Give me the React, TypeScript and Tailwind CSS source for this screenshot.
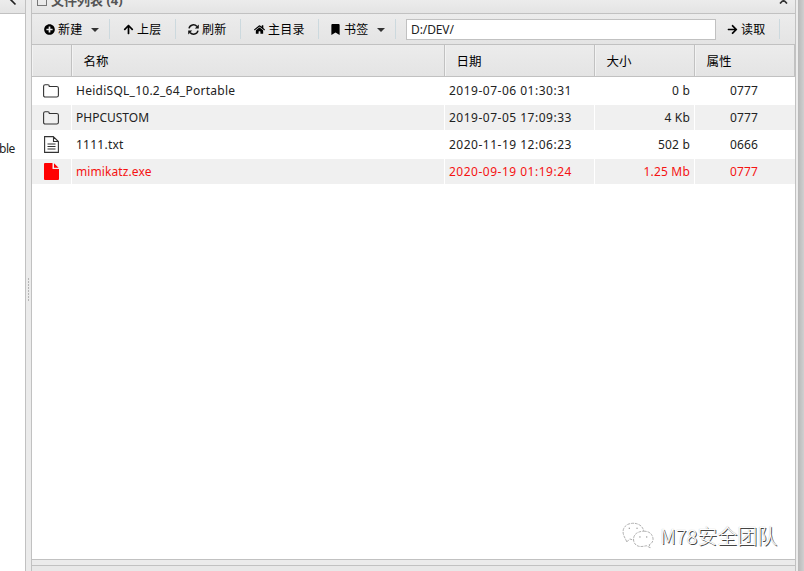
import React from "react";
import { FaPlusCircle, FaArrowUp, FaArrowRight, FaHome, FaBookmark } from "react-icons/fa";

const BAR = "bg-linear-to-b from-[#ececec] to-[#e4e4e4]";

function FolderIcon() {
  return (
    <svg width="16" height="14" viewBox="0 0 16 14" fill="none" stroke="#333" strokeWidth="1.1">
      <path d="M.6 2.3Q.6.7 2.2.7H4.9Q6.3.7 6.3 2.5H13.6Q15.4 2.5 15.4 4.1V11.4Q15.4 13 13.6 13H2.3Q.6 13 .6 11.4Z" />
    </svg>
  );
}

function TextIcon() {
  return (
    <svg width="15" height="17" viewBox="0 0 15 17" fill="none" stroke="#333" strokeWidth="1.1">
      <path d="M.6.6H9.3L14.4 5.5V16.4H.6ZM9.5.6V5.5H14.4M3.5 8H11.5M3.5 10.5H11.5M3.5 13H11.5" />
    </svg>
  );
}

function FileIcon() {
  return (
    <svg width="15" height="17" viewBox="0 0 15 17" fill="#f00">
      <path d="M1 0H8.5V6H15V16Q15 17 14 17H1Q0 17 0 16V1Q0 0 1 0ZM10 0.2L14.6 4.8H10Z" />
    </svg>
  );
}

function RefreshIcon() {
  return (
    <svg width="11" height="11" viewBox="0 0 11 11" fill="none" stroke="#111" strokeWidth="1.5">
      <path d="M1 4.4C2 .5 6.5-.2 9 2.5M10 6.6C9 10.5 4.5 11.2 2 8.5" />
      <path d="M10.8.5V4.5H6.8ZM.2 10.5V6.5H4.2Z" fill="#111" stroke="none" />
    </svg>
  );
}

function Caret() {
  return (
    <svg width="8" height="4" viewBox="0 0 8 4" fill="#333">
      <path d="M0 0H8L4 4Z" />
    </svg>
  );
}

function Tool({ icon, label, caret, className }: { icon: React.ReactNode; label: string; caret?: boolean; className: string }) {
  return (
    <div className={`flex h-5 shrink-0 items-center border-r border-[#ccd9de] text-black ${className}`}>
      <span className="flex w-[11px] shrink-0 justify-center">{icon}</span>
      <span className="ml-[3px] pt-px whitespace-nowrap text-[12px] tracking-[0.2px]">{label}</span>
      {caret && <span className="ml-[9px] pt-px"><Caret /></span>}
    </div>
  );
}

const files = [
  { icon: <FolderIcon />, name: "HeidiSQL_10.2_64_Portable", tracking: "tracking-[0.26px]", date: "2019-07-06 01:30:31", size: "0 b", mode: "0777" },
  { icon: <FolderIcon />, name: "PHPCUSTOM", tracking: "", date: "2019-07-05 17:09:33", size: "4 Kb", mode: "0777" },
  { icon: <TextIcon />, name: "1111.txt", tracking: "tracking-[0.25px]", date: "2020-11-19 12:06:23", size: "502 b", mode: "0666" },
  { icon: <FileIcon />, name: "mimikatz.exe", tracking: "tracking-[0.1px]", date: "2020-09-19 01:19:24", size: "1.25 Mb", mode: "0777", danger: true },
];

const COLS = "grid grid-cols-[39px_372px_149px_99px_100px] gap-x-px";

export default function App() {
  return (
    <div className="relative flex h-[571px] w-[804px] overflow-hidden bg-[#ebebeb] font-['Noto_Sans','Noto_Sans_CJK_SC',sans-serif] text-[12px] text-[#222]">
      <aside className="w-[26px] shrink-0 overflow-hidden border-r border-[#c1c1c1] bg-white">
        <div className={`h-[14px] border-b border-[#c1c1c1] ${BAR}`}>
          <svg className="ml-[9px]" width="8" height="6" viewBox="0 0 8 6" fill="none" stroke="#222" strokeWidth="1.7">
            <path d="M1-1L6.5 4.5" />
          </svg>
        </div>
        <div className="mt-[127px] h-4 w-[15px] leading-4 tracking-[-0.5px]">
          <span className="-ml-px">ble</span>
        </div>
      </aside>
      <div className="flex w-[5px] shrink-0 items-center justify-center pt-[8px]">
        <div className="flex flex-col gap-px">
          {Array.from({ length: 8 }, (_, i) => <i key={i} className="h-[2px] w-px bg-[#b5b5b5]" />)}
        </div>
      </div>
      <div className="flex w-[765px] shrink-0 flex-col border-x border-[#c1c1c1]">
        <main className="flex h-[560px] flex-col border-b border-[#c1c1c1] bg-white">
          <div className={`flex h-[14px] shrink-0 justify-between border-b border-[#c1c1c1] ${BAR}`}>
            <div className="mt-[-8px] flex h-4 items-center pl-[5px] text-[13px] leading-4 font-bold text-[#555]">
              <span className="mt-[3px] mr-[4px] h-[9px] w-[10px] border border-[#777]" />文件列表 (4)
            </div>
            <svg className="mr-[7px]" width="9" height="4" viewBox="0 0 9 4" fill="none" stroke="#333" strokeWidth="1.7">
              <path d="M1 3.5L4.5 0L8 3.5M2-2L4.5 0L7-2" />
            </svg>
          </div>
          <div className={`flex h-[31px] shrink-0 items-center border-b border-[#c1c1c1] ${BAR}`}>
            <Tool className="w-[78px] pl-[12px]" icon={<FaPlusCircle size={11} />} label="新建" caret />
            <Tool className="w-[66px] pl-[13px]" icon={<FaArrowUp size={11} />} label="上层" />
            <Tool className="w-[65px] pl-[12px]" icon={<RefreshIcon />} label="刷新" />
            <Tool className="w-[78px] pl-[13px]" icon={<FaHome size={11} />} label="主目录" />
            <Tool className="w-[77px] pl-[11px]" icon={<FaBookmark size={11} />} label="书签" caret />
            <input
              className="ml-[10px] h-[21px] w-[310px] shrink-0 border border-[#c1c1c1] bg-white px-1 tracking-[-0.1px] text-[#222] outline-none"
              defaultValue="D:/DEV/"
            />
            <Tool className="w-[64px] pl-[11px]" icon={<FaArrowRight size={11} />} label="读取" />
          </div>
          <div className={`grid h-8 shrink-0 grid-cols-[40px_373px_150px_100px_100px] border-b border-[#c1c1c1] text-[12.5px] text-black ${BAR}`}>
            {["", "名称", "日期", "大小", "属性"].map((h, i) => (
              <div key={i} className="flex items-center border-r border-[#c1c1c1] pt-[3px] pl-[11.5px] shadow-[inset_1px_0_#f3f3f3]">{h}</div>
            ))}
          </div>
          <div className="flex flex-col gap-[2px] pt-px">
            {files.map((f, i) => {
              const bg = i % 2 ? "bg-[#f0f0f0]" : "bg-white";
              return (
                <div key={f.name} className={`${COLS} h-[25px] leading-[25px] whitespace-nowrap ${f.danger ? "text-[#f51313]" : ""}`}>
                  <div className={`flex items-center justify-center pr-px ${bg}`}>{f.icon}</div>
                  <div className={`pl-1 ${f.tracking} ${bg}`}>{f.name}</div>
                  <div className={`pl-1 tracking-[0.5px] ${bg}`}>{f.date}</div>
                  <div className={`pr-1 text-right tracking-[0.2px] ${bg}`}>{f.size}</div>
                  <div className={`pr-[2px] text-center tracking-[0.15px] ${bg}`}>{f.mode}</div>
                </div>
              );
            })}
          </div>
        </main>
        <div className="mt-[5px] flex-1 border-t border-[#c1c1c1] bg-[#e8e8e8]" />
      </div>
      <div className="w-[2px] shrink-0 bg-[#ececec]" />
      <div className="flex-1 bg-linear-to-r from-[#b8b8b8] to-[#d0d0d0]" />
      <div className="absolute top-[522px] left-[622px] flex items-center">
        <svg width="33" height="28" viewBox="0 0 34 28" fill="white" stroke="#999" strokeWidth=".8" strokeDasharray="3 1">
          <path d="M5 20L2 14Q-1 6 6 2Q14-1 20 4Q23 8 22 10M5 20L8 17Q10 18 13 18" />
          <path d="M22 9Q31 9 32 17Q32 21 28 23L29 26L25 24Q14 27 12 19Q11 10 22 9Z" />
          <path d="M7 6H8M15 6H16M18 15H19M25 15H26" stroke="#333" />
        </svg>
        <span className="ml-[5px] text-[20px] leading-[28px] font-light whitespace-nowrap text-white [text-shadow:1px_1px_0_#444,0_0_1px_#aaa] font-['Noto_Sans_CJK_SC',sans-serif]">M78安全团队</span>
      </div>
    </div>
  );
}
